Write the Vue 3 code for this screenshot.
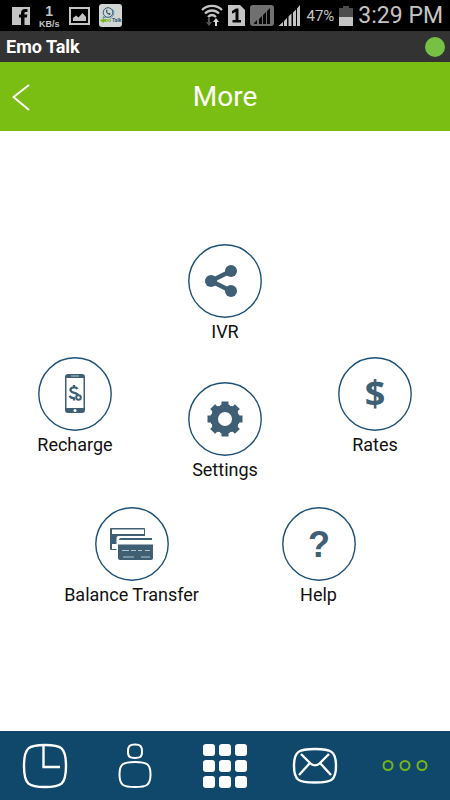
<script setup>
import { ref } from 'vue';

const activeTab = ref('more');

const rows = [
  { name: 'top', items: [{ id: 'ivr', label: 'IVR' }] },
  {
    name: 'middle',
    items: [
      { id: 'recharge', label: 'Recharge' },
      { id: 'settings', label: 'Settings' },
      { id: 'rates', label: 'Rates' },
    ],
  },
  {
    name: 'bottom',
    items: [
      { id: 'transfer', label: 'Balance Transfer' },
      { id: 'help', label: 'Help' },
    ],
  },
];

const tabs = [
  { id: 'recent', label: 'Recent calls' },
  { id: 'contacts', label: 'Contacts' },
  { id: 'keypad', label: 'Keypad' },
  { id: 'messages', label: 'Messages' },
  { id: 'more', label: 'More' },
];

const teeth = [0, 45, 90, 135, 180, 225, 270, 315];
</script>

<template>
  <div class="app">
    <!-- Status bar -->
    <div class="status">
      <div class="status__group status__group--left">
        <svg width="18" height="18" viewBox="0 0 18 18">
          <rect width="18" height="18" fill="#c4c4c4" />
          <path d="M9 18V10.500H7V7.500H9V6C9 3.500 10.500 2 13 2H15.500V5H13.800C12.800 5 12.500 5.400 12.500 6.200V7.500H15.300L14.900 10.500H12.500V18Z" fill="#080808" />
        </svg>
        <div class="status__speed"><b>1</b><span>KB/s</span></div>
        <svg width="21" height="18" viewBox="0 0 21 18">
          <rect x="1" y="1" width="19" height="16" fill="none" stroke="#c4c4c4" stroke-width="2" />
          <path d="M4 14V11L7 8.500L9.500 10.500L13.500 6L17 10V14Z" fill="#c4c4c4" />
        </svg>
        <svg class="status__app" width="23" height="23" viewBox="0 0 23 23">
          <rect width="23" height="23" rx="3" fill="#d2d6d3" />
          <circle cx="9" cy="8.500" r="4.800" fill="none" stroke="#2c5876" stroke-width="1" />
          <path d="M5 12L4 14L7 13M13 5C16 7 15.500 12 11 14.500" fill="none" stroke="#5b91ac" stroke-width="1" />
          <path d="M7 6C6.500 8.500 9 11 11 11L11.500 9.500L10 8.800L9.200 9.300L8 7.700L8.700 7L8 5.500Z" fill="#2c5876" />
          <path d="M5 14L1 16.500L5 19V17.500H7V15.500H5Z" fill="#79b51c" />
          <text x="5" y="18" font-size="5" font-weight="700" fill="#79b51c">mo</text>
          <text x="13" y="18" font-size="5" font-weight="700" fill="#2c5876">Talk</text>
        </svg>
      </div>
      <div class="status__group status__group--right">
        <svg width="22" height="23" viewBox="0 0 22 23">
          <g fill="none" stroke="#c4c4c4" stroke-width="2.400">
            <path d="M1 6C6.500 0.500 15.500 0.500 21 6" />
            <path d="M4 9.500C8 5.500 14 5.500 18 9.500" />
            <path d="M7 13C9.500 10.500 12.500 10.500 15 13" />
          </g>
          <path d="M7 14H9V18H11L8 22L5 18H7Z" fill="#555" />
          <path d="M14 22H16V18H18L15 14L12 18H14Z" fill="#d8d8d8" />
        </svg>
        <svg width="17" height="21" viewBox="0 0 17 21">
          <path d="M0 0H12L17 5V21H0Z" fill="#c4c4c4" />
          <path d="M4 6L8 3.500H10.500V15H13V17.500H4.500V15H7.500V7L4 8.700Z" fill="#080808" />
        </svg>
        <svg width="24" height="21" viewBox="0 0 24 21">
          <rect width="24" height="21" rx="3" fill="#707070" />
          <path d="M4 18L7 15V19H4ZM9 14L12 11V19H9ZM13 10L16 7V19H13ZM17 6L20 3V19H17Z" fill="#080808" />
        </svg>
        <svg width="22" height="21" viewBox="0 0 22 21">
          <path d="M0 20.500L4 17V21H0ZM5 16L8 13V21H5ZM9.500 11.500L12.500 8.500V21H9.500ZM14 7.500L17 4.500V21H14ZM18 3.500L21 0V21H18Z" fill="#c4c4c4" />
        </svg>
        <span class="status__percent">47%</span>
        <svg width="14" height="20" viewBox="0 0 14 20">
          <path d="M0 2H4V0H10V2H14V20H0Z" fill="#4c4c4c" />
          <rect y="11" width="14" height="9" fill="#c4c4c4" />
        </svg>
        <time class="status__time">3:29 PM</time>
      </div>
    </div>

    <div class="brand">
      <span>Emo Talk</span>
      <i class="brand__online"></i>
    </div>

    <header class="header">
      <button class="header__back" aria-label="Back">
        <svg width="18" height="28" viewBox="0 0 18 28">
          <path d="M17 2L1.500 14L17 27" fill="none" stroke="#fff" stroke-width="2" />
        </svg>
      </button>
      <h1 class="header__title">More</h1>
    </header>

    <!-- Menu -->
    <main class="menu">
      <div v-for="row in rows" :key="row.name" class="menu__row" :class="`menu__row--${row.name}`">
        <button v-for="item in row.items" :key="item.id" class="item" :class="`item--${item.id}`">
          <span class="item__circle">
            <svg width="74" height="74" viewBox="0 0 74 74" fill="#3f5f75">
              <circle cx="37" cy="37" r="36.200" fill="none" stroke="#1d5077" stroke-width="1.400" />
              <g v-if="item.id === 'ivr'">
                <path d="M43 27L23 37L43 47" fill="none" stroke="#3f5f75" stroke-width="4.500" />
                <circle cx="23" cy="37" r="6" />
                <circle cx="43" cy="27" r="6" />
                <circle cx="43" cy="47" r="6" />
              </g>
              <g v-else-if="item.id === 'recharge'">
                <rect x="27" y="17" width="20" height="39" rx="3" />
                <rect x="28.500" y="21" width="17" height="30" fill="#fff" />
                <path d="M33 19H41" stroke="#b7c4cc" stroke-width="1" />
                <circle cx="37" cy="53.500" r="1.500" fill="#fff" />
                <path d="M39.500 32C38 29.500 32.500 29.700 32.500 33C32.500 36.500 39 35 40 38M36 28V31M31.500 39C33 41 34.500 41.500 37 41M36 41V43.500" fill="none" stroke="#3f5f75" stroke-width="2.300" />
                <circle cx="40.500" cy="40.500" r="2.300" fill="#fff" stroke="#3f5f75" stroke-width="2" />
              </g>
              <g v-else-if="item.id === 'settings'">
                <path
                  v-for="angle in teeth"
                  :key="angle"
                  d="M32 25V23.500L33.500 22.500V19.500H40.500V22.500L42 23.500V25Z"
                  :transform="`rotate(${angle} 37 37)`"
                />
                <circle cx="37" cy="37" r="10.500" fill="none" stroke="#3f5f75" stroke-width="7" />
              </g>
              <text v-else-if="item.id === 'rates'" class="item__dollar" x="37" y="49" text-anchor="middle">$</text>
              <g v-else-if="item.id === 'transfer'">
                <rect x="15" y="21" width="35" height="22" rx="1" />
                <rect x="17" y="22.500" width="32" height="4.500" fill="#fff" />
                <path d="M17 37H24V42H17Z" fill="#fff" />
                <rect x="21.500" y="29" width="38.500" height="24" rx="2" fill="#fff" />
                <path d="M24 33Q24 31 26 31H57V33Z" />
                <path d="M23 37.500H58V51Q58 53 56 53H25Q23 53 23 51Z" />
                <path d="M27 43.500H34M36 43.500H41M43 43.500H47M50 43.500H55M28 50H39M46 50H55" stroke="#b7c4cc" stroke-width="1" />
              </g>
              <text v-else class="item__question" x="37" y="50" text-anchor="middle">?</text>
            </svg>
          </span>
          <span class="item__label">{{ item.label }}</span>
        </button>
      </div>
    </main>

    <!-- Bottom tabs -->
    <nav class="tabs">
      <button
        v-for="tab in tabs"
        :key="tab.id"
        class="tabs__button"
        :class="{ 'is-active': activeTab === tab.id }"
        :aria-label="tab.label"
        @click="activeTab = tab.id"
      >
        <svg width="46" height="46" viewBox="0 0 46 46" fill="none" stroke="currentColor" stroke-width="2.400">
          <g v-if="tab.id === 'recent'">
            <path d="M23 2C39 2 44 4 44 23S39 44 23 44S2 42 2 23S7 2 23 2Z" />
            <path d="M21.500 2V24H38" />
          </g>
          <g v-else-if="tab.id === 'contacts'" stroke-width="2">
            <path d="M23 1.500C28.500 1.500 30 3 30 8.500S28.500 15 23 15S16 14 16 8.500S17.500 1.500 23 1.500Z" />
            <path d="M23 19C35 19 38.500 21 38.500 31.500S35 44 23 44S7.500 42 7.500 31.500S11 19 23 19Z" />
          </g>
          <g v-else-if="tab.id === 'keypad'" fill="currentColor" stroke="none">
            <template v-for="y in [1, 17, 33]" :key="y">
              <rect v-for="x in [1, 17, 33]" :key="x" :x="x" :y="y" width="12" height="12" rx="3" />
            </template>
          </g>
          <g v-else-if="tab.id === 'messages'">
            <path d="M23 6C39 6 44 8 44 23S39 39.500 23 39.500S2 38 2 23S7 6 23 6Z" />
            <path d="M9 11L18 20C21 23 25 23 28 20L37 11M7 32L18 20M39 32L28 20" />
          </g>
          <g v-else stroke-width="2">
            <circle cx="6" cy="22.500" r="4.500" />
            <circle cx="23" cy="22.500" r="4.500" />
            <circle cx="40" cy="22.500" r="4.500" />
          </g>
        </svg>
      </button>
    </nav>
  </div>
</template>

<style>
body {
  margin: 0;
  background: #fff;
}
</style>

<style scoped>
.app {
  min-height: 100vh;
  display: flex;
  flex-direction: column;
  font-family: Roboto, "Noto Sans", sans-serif;
  color: #111;
}

button {
  padding: 0;
  border: none;
  background: none;
  font: inherit;
  color: inherit;
  cursor: pointer;
}

svg {
  display: block;
  flex-shrink: 0;
}

.status {
  height: 31px;
  padding: 0 7px 0 12px;
  display: flex;
  align-items: center;
  justify-content: space-between;
  background: #000;
  color: #c4c4c4;
}

.status__group {
  display: flex;
  align-items: center;
}

.status__group--left {
  gap: 9px;
}

.status__group--right {
  gap: 5px;
}

.status__speed {
  display: flex;
  flex-direction: column;
  align-items: center;
  font-family: "Liberation Sans", sans-serif;
  font-size: 9px;
  font-weight: 700;
  line-height: 10px;
}

.status__speed b {
  font-size: 14px;
  line-height: 16px;
}

.status__percent {
  font-size: 15px;
}

.status__time {
  font-size: 23px;
  white-space: nowrap;
}

.brand {
  height: 31px;
  padding: 0 5px 0 6px;
  display: flex;
  align-items: center;
  justify-content: space-between;
  background: #333;
  color: #fff;
  font-size: 18px;
  font-weight: 700;
}

.brand__online {
  width: 20px;
  height: 20px;
  border-radius: 50%;
  background: #76c043;
}

.header {
  height: 69px;
  padding: 0 12px;
  display: grid;
  grid-template-columns: 1fr auto 1fr;
  align-items: center;
  background: #7bbe13;
  color: #fff;
}

.header__back {
  justify-self: start;
}

.header__title {
  margin: 0;
  font-size: 28px;
  font-weight: 400;
}

.menu {
  flex: 1;
  padding: 113px 0 32px;
}

.menu__row {
  display: flex;
  align-items: flex-start;
}

.menu__row--middle {
  margin-top: 15px;
}

.menu__row--bottom {
  margin-top: 27px;
  padding: 0 38px;
}

.item {
  flex: 1 1 0;
  display: flex;
  flex-direction: column;
  align-items: center;
  gap: 4px;
}

.item--settings {
  margin-top: 25px;
}

.item__label {
  font-size: 18px;
  line-height: 20px;
  white-space: nowrap;
}

.item__dollar {
  font-family: "Open Sans", sans-serif;
  font-size: 36px;
  font-weight: 700;
}

.item__question {
  font-family: "Liberation Sans", sans-serif;
  font-size: 36px;
  font-weight: 700;
}

.tabs {
  height: 69px;
  display: flex;
  align-items: center;
  background: #10486c;
  color: #fff;
}

.tabs__button {
  flex: 1;
  display: flex;
  justify-content: center;
}

.tabs__button.is-active {
  color: #76b41b;
}
</style>
